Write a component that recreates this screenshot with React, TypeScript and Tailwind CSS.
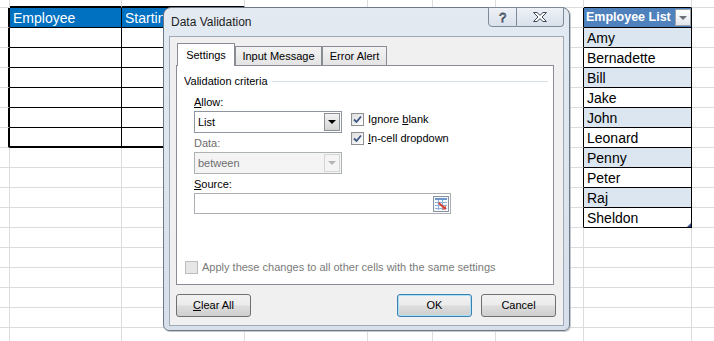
import React from 'react';

const COL_W = [
  'w-[10px]',
  'w-[112px]',
  'w-[123px]',
  'w-[123px]',
  'w-[65px]',
  'w-[63px]',
  'w-[88px]',
  'w-[108px]',
  'flex-1',
];

const ROW_COUNT = 18;

const employees = ['Amy', 'Bernadette', 'Bill', 'Jake', 'John', 'Leonard', 'Penny', 'Peter', 'Raj', 'Sheldon'];

function inLeftTable(r: number, c: number) {
  return r >= 1 && r <= 7 && (c === 1 || c === 2);
}

function inRightTable(r: number, c: number) {
  return r >= 1 && r <= 11 && c === 7;
}

function rightBorder(r: number, c: number) {
  if (c === 0 && r >= 1 && r <= 7) return 'border-r-2 border-r-black';
  if (inLeftTable(r, c)) return 'border-r border-r-black';
  if (c === 6 && r >= 1 && r <= 11) return 'border-r border-r-black';
  if (inRightTable(r, c)) return 'border-r border-r-black';
  if (c === 8) return '';
  return 'border-r border-r-[#DADCDD]';
}

function bottomBorder(r: number, c: number) {
  if (r === 0 && (c === 1 || c === 2)) return 'border-b-2 border-b-black';
  if (r === 7 && (c === 1 || c === 2)) return 'border-b-2 border-b-black';
  if (inLeftTable(r, c)) return 'border-b border-b-black';
  if (r === 0 && c === 7) return 'border-b border-b-black';
  if (inRightTable(r, c)) return 'border-b border-b-black';
  return 'border-b border-b-[#DADCDD]';
}

function cellBg(r: number, c: number) {
  if (r === 1 && (c === 1 || c === 2)) return 'bg-[#0070C0] text-white';
  if (r === 1 && c === 7) return 'bg-[#4F81BD] text-white';
  if (inRightTable(r, c) && r % 2 === 0) return 'bg-[#DCE6F1]';
  return 'bg-white';
}

function CellContent({ r, c }: { r: number; c: number }) {
  if (r === 1 && c === 1) return <span className="pl-[3px]">Employee</span>;
  if (r === 1 && c === 2) {
    // only the start of the header peeks out from under the dialog
    return <span className="ml-[3px] w-[38px] overflow-hidden whitespace-nowrap">Starting Date</span>;
  }
  if (r === 1 && c === 7) {
    return (
      <div className="flex h-full w-full items-center justify-between">
        <span className="pl-[2px] text-[12.5px] font-bold">Employee List</span>
        <div className="flex h-[17px] w-[16px] items-center justify-center border border-[#9DA3AB] bg-[linear-gradient(#FFFFFF,#E3E6EA)]">
          <div className="h-0 w-0 border-x-[4px] border-t-[4px] border-x-transparent border-t-[#6B7078]" />
        </div>
      </div>
    );
  }
  if (c === 7 && r >= 2 && r <= 11) {
    return (
      <>
        <span className="pl-[3px]">{employees[r - 2]}</span>
        {r === 11 && (
          <div className="absolute bottom-0 right-0 h-0 w-0 border-l-[4px] border-b-[4px] border-l-transparent border-b-[#2F4F8F]" />
        )}
      </>
    );
  }
  return null;
}

function Sheet() {
  return (
    <div className="flex flex-col">
      {Array.from({ length: ROW_COUNT }).map((_, r) => (
        <div key={r} className={`flex ${r === 0 ? 'h-[8px]' : 'h-[20px]'}`}>
          {COL_W.map((w, c) => (
            <div
              key={c}
              className={`relative flex shrink-0 items-center overflow-hidden text-[14px] leading-none ${w} ${rightBorder(r, c)} ${bottomBorder(r, c)} ${cellBg(r, c)}`}
            >
              <CellContent r={r} c={c} />
            </div>
          ))}
        </div>
      ))}
    </div>
  );
}

function Checkbox({ checked, disabled }: { checked?: boolean; disabled?: boolean }) {
  return (
    <div
      className={`flex h-[13px] w-[13px] shrink-0 items-center justify-center border ${
        disabled ? 'border-[#BCBCBC] bg-[#E6E6E6]' : 'border-[#8E8F8F] bg-[linear-gradient(135deg,#DCDCDC,#FFFFFF)]'
      }`}
    >
      {checked && (
        <svg width="9" height="9" viewBox="0 0 9 9">
          <path d="M1 4.5 L3.5 7 L8 1.5" fill="none" stroke="#3B5683" strokeWidth="1.8" />
        </svg>
      )}
    </div>
  );
}

function Select({ value, disabled }: { value: string; disabled?: boolean }) {
  return (
    <div
      className={`flex h-[22px] w-[148px] items-center justify-between border pl-[3px] ${
        disabled ? 'border-[#ADB2B5] bg-[#F4F4F4] text-[#6D6D6D]' : 'border-[#8F959E] bg-white'
      }`}
    >
      <span>{value}</span>
      <div
        className={`mr-px flex h-[18px] w-[16px] items-center justify-center border ${
          disabled ? 'border-[#D5D5D5] bg-[#F4F4F4]' : 'border-[#8B8F96] bg-[linear-gradient(#F3F3F3,#D4D4D4)]'
        }`}
      >
        <div
          className={`h-0 w-0 border-x-[4px] border-t-[4px] border-x-transparent ${
            disabled ? 'border-t-[#B5B5B5]' : 'border-t-black'
          }`}
        />
      </div>
    </div>
  );
}

function RangeIcon() {
  return (
    <svg width="16" height="16" viewBox="0 0 16 16">
      <rect x="0.5" y="0.5" width="15" height="15" fill="#F4F7FB" stroke="#8894A4" />
      <rect x="2" y="2" width="12" height="2" fill="#6F97CC" />
      <path d="M2 6.5 H14 M2 9.5 H14 M2 12.5 H14 M5.5 4 V14 M9.5 4 V14" stroke="#8FB0D8" strokeWidth="1" />
      <path d="M6 6 L12 11 L13 9 L13 13.5 L8.5 13.5 L10.5 12.5 L5 7.5 Z" fill="#D7402F" />
    </svg>
  );
}

function DialogButton({ children, primary }: { children: React.ReactNode; primary?: boolean }) {
  return (
    <div
      className={`flex h-[23px] w-[75px] items-center justify-center rounded-[3px] border bg-[linear-gradient(#F2F2F2_0%,#EBEBEB_48%,#DDDDDD_52%,#CFCFCF_100%)] ${
        primary ? 'border-[#3C7FB1] shadow-[inset_0_0_0_1px_#A8E1F7]' : 'border-[#707070]'
      }`}
    >
      {children}
    </div>
  );
}

function DataValidationDialog() {
  return (
    <div className="absolute left-[163px] top-[7px] flex h-[324px] w-[407px] flex-col rounded-t-[8px] rounded-b-[6px] border border-[#6E7886] bg-[linear-gradient(#E3EAF2,#D6DFEA)] px-[5px] pb-[4px] text-[11px] leading-[13px] text-black shadow-[1px_1px_0_#C4C9D0]">
      <div className="flex h-[28px] items-start justify-between">
        <div className="pl-[2px] pt-[7px] text-[12px] leading-[14px] text-[#1E1E1E]">Data Validation</div>
        <div className="-mt-px flex h-[20px]">
          <div className="flex w-[29px] items-center justify-center rounded-bl-[4px] border border-[#7E8A98] bg-[linear-gradient(#EEF2F7,#D9E1EB)] text-[13px] text-white [-webkit-text-stroke:0.8px_#3E4B5B]">
            ?
          </div>
          <div className="flex w-[47px] items-center justify-center rounded-br-[4px] border border-l-0 border-[#7E8A98] bg-[linear-gradient(#EEF2F7,#D9E1EB)]">
            <svg width="14" height="10" viewBox="0 0 14 10">
              <path
                d="M0.5 0.5 H4 L7 3.3 L10 0.5 H13.5 L9 5 L13.5 9.5 H10 L7 6.7 L4 9.5 H0.5 L5 5 Z"
                fill="#FFFFFF"
                stroke="#3E4B5B"
                strokeWidth="1"
              />
            </svg>
          </div>
        </div>
      </div>

      <div className="flex flex-1 flex-col border border-[#A0A9B5] bg-[#F0F0F0] pl-[6px] pr-[9px] pt-[6px]">
        {/* tabs */}
        <div className="flex h-[22px] items-end">
          <div className="relative z-10 -mb-px ml-px flex h-[23px] w-[58px] items-center justify-center border border-b-0 border-[#898C95] bg-white">
            Settings
          </div>
          <div className="flex h-[19px] w-[87px] items-center justify-center border border-b-0 border-[#898C95] bg-[linear-gradient(#F3F3F3,#E3E3E3)] pt-px">
            Input Message
          </div>
          <div className="flex h-[19px] w-[65px] items-center justify-center border border-b-0 border-[#898C95] bg-[linear-gradient(#F3F3F3,#E3E3E3)] pt-px">
            Error Alert
          </div>
        </div>

        {/* panel */}
        <div className="flex h-[220px] flex-col border border-[#898C95] bg-white">
          <div className="mt-[9px] flex h-[13px] items-center pl-[7px] pr-[5px]">
            <span>Validation criteria</span>
            <div className="ml-[4px] h-px flex-1 bg-[#D5DFE5]" />
          </div>

          <div className="mt-[8px] flex pl-[17px]">
            <div className="flex w-[148px] flex-col">
              <div className="h-[13px]">
                <span className="underline">A</span>llow:
              </div>
              <div className="mt-[2px]">
                <Select value="List" />
              </div>
              <div className="mt-[4px] h-[13px] text-[#6D6D6D]">Data:</div>
              <div className="mt-[2px]">
                <Select value="between" disabled />
              </div>
            </div>
            <div className="ml-[9px] flex flex-col gap-[6px] pt-[17px]">
              <div className="flex items-center gap-[4px]">
                <Checkbox checked />
                <span>
                  Ignore <span className="underline">b</span>lank
                </span>
              </div>
              <div className="flex items-center gap-[4px]">
                <Checkbox checked />
                <span>
                  <span className="underline">I</span>n-cell dropdown
                </span>
              </div>
            </div>
          </div>

          <div className="mt-[4px] h-[13px] pl-[17px]">
            <span className="underline">S</span>ource:
          </div>
          <div className="ml-[17px] mt-[2px] flex h-[21px] w-[257px] items-center justify-end border border-[#ABADB3] bg-white pr-px">
            <RangeIcon />
          </div>

          <div className="mb-[10px] mt-auto flex items-center gap-[4px] pl-[8px] text-[#7A7A7A]">
            <Checkbox disabled />
            <span>Apply these changes to all other cells with the same settings</span>
          </div>
        </div>

        {/* buttons */}
        <div className="-mr-[2px] mt-[9px] flex justify-between">
          <DialogButton>
            <span>
              <span className="underline">C</span>lear All
            </span>
          </DialogButton>
          <div className="flex gap-[9px]">
            <DialogButton primary>OK</DialogButton>
            <DialogButton>Cancel</DialogButton>
          </div>
        </div>
      </div>
    </div>
  );
}

export default function App() {
  return (
    <div className="relative h-[341px] w-[714px] overflow-hidden bg-white font-['Liberation_Sans',Arial,sans-serif]">
      <Sheet />
      <DataValidationDialog />
    </div>
  );
}
